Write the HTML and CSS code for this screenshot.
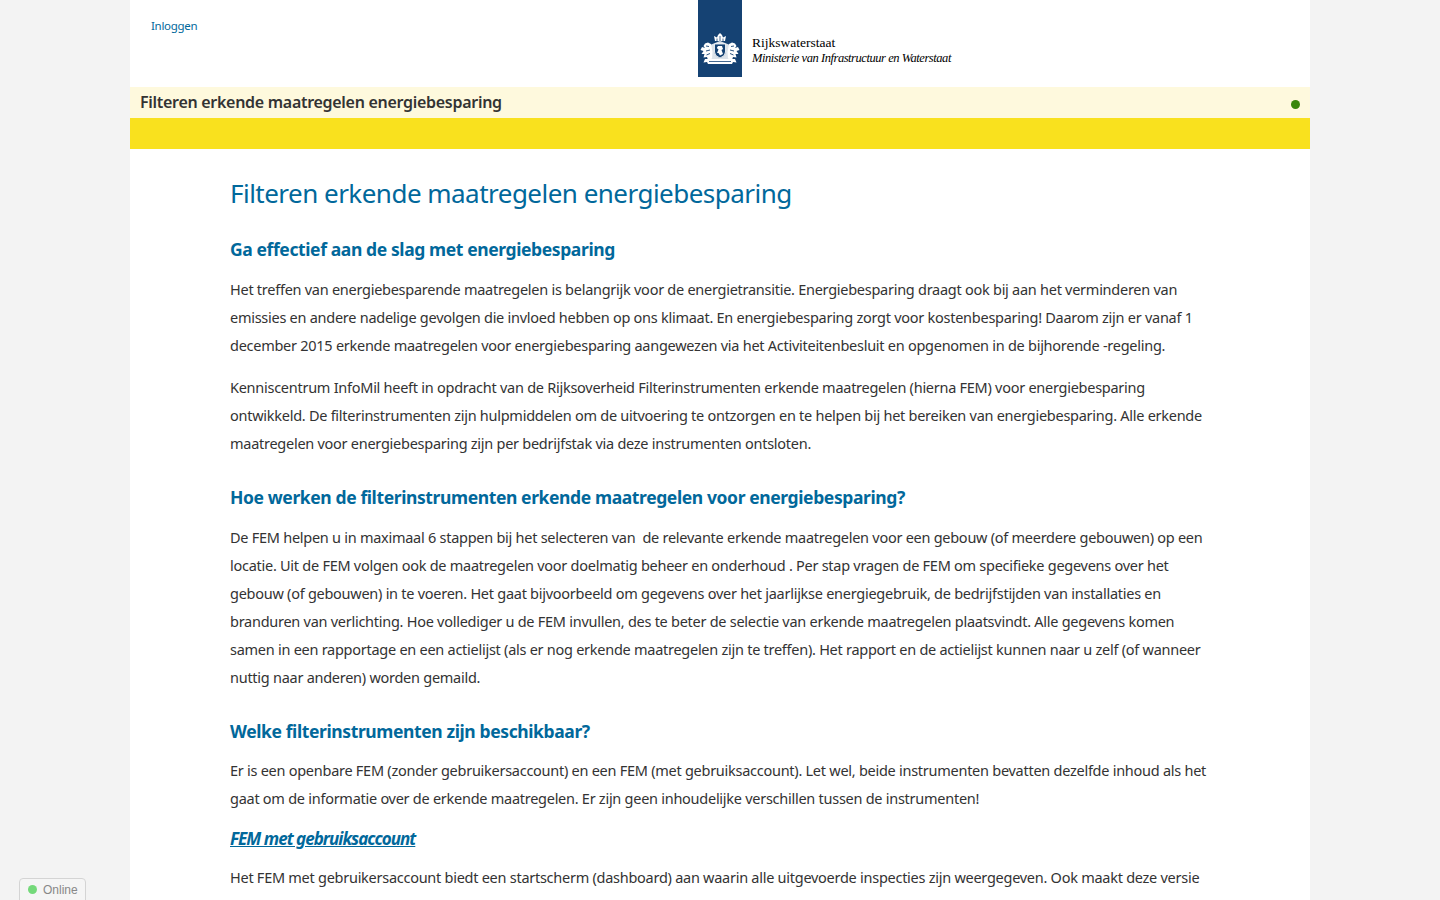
FILE: index.html

```html
<!DOCTYPE html>
<html lang="nl">
<head>
    <meta charset="utf-8">
    <title>Filteren erkende maatregelen energiebesparing</title>
    <link rel="stylesheet" href="styles.css">
</head>
<body>
    <div class="wrapper">
        <header class="top">
            <a class="login" href="#">Inloggen</a>
            <div class="logo">
                <div class="logo-block">
                    <svg class="crest" width="40" height="34" viewBox="0 0 40 34">
                        <!-- crown -->
                        <path d="M15 9 L14 4 L17 5.5 L18 3 L20 1 L22 3 L23 5.5 L26 4 L25 9 Z" fill="#fff"/>
                        <path d="M17 6.5 V9 M20 4 V9 M23 6.5 V9" stroke="#154273" stroke-width="0.8"/>
                        <!-- mantle -->
                        <path d="M20 9 L30 13 L29 27 H11 L10 13 Z" fill="#fff" opacity="0.85"/>
                        <!-- shield -->
                        <path d="M14.5 12 H25.5 V20 Q25.5 24 20 26 Q14.5 24 14.5 20 Z" fill="#154273" stroke="#fff" stroke-width="0.8"/>
                        <path d="M18 14 L22 14 L23 17 L21.5 18 L23 22 L20 23.5 L18.5 21 L17 21 L18.5 17.5 L16.8 16 Z" fill="#fff"/>
                        <!-- lions -->
                        <g fill="#fff">
                            <path d="M11 12 L8 10.5 L5 11.5 L3.5 14 L5 16 L2 15 L0.5 18 L3.5 19 L1.5 22 L4.5 22 L3.5 25.5 L7 25 L8 28 L12 26.5 L12.5 20 Z"/>
                            <path d="M6 14 L9 14.5 M6 19 L10 18 M6.5 23 L10 21.5" stroke="#154273" stroke-width="0.9" fill="none"/>
                        </g>
                        <g fill="#fff" transform="translate(40 0) scale(-1 1)">
                            <path d="M11 12 L8 10.5 L5 11.5 L3.5 14 L5 16 L2 15 L0.5 18 L3.5 19 L1.5 22 L4.5 22 L3.5 25.5 L7 25 L8 28 L12 26.5 L12.5 20 Z"/>
                            <path d="M6 14 L9 14.5 M6 19 L10 18 M6.5 23 L10 21.5" stroke="#154273" stroke-width="0.9" fill="none"/>
                        </g>
                        <!-- ribbon -->
                        <path d="M5 27 H35 L36.5 30.5 L33 30 L32 32 H8 L7 30 L3.5 30.5 Z" fill="#fff"/>
                        <path d="M9 29.5 H31" stroke="#154273" stroke-width="0.8"/>
                    </svg>
                </div>
                <div class="logo-text">
                    <span class="logo-org">Rijkswaterstaat</span>
                    <span class="logo-min">Ministerie van Infrastructuur en Waterstaat</span>
                </div>
            </div>
        </header>

        <div class="title-bar">
            <span class="app-title">Filteren erkende maatregelen energiebesparing</span>
            <span class="status-dot"></span>
        </div>
        <div class="yellow-bar"></div>

        <main class="content">
            <h1>Filteren erkende maatregelen energiebesparing</h1>

            <h2>Ga effectief aan de slag met energiebesparing</h2>
            <p>Het treffen van energiebesparende maatregelen is belangrijk voor de energietransitie. Energiebesparing draagt ook bij aan het verminderen van<br>emissies en andere nadelige gevolgen die invloed hebben op ons klimaat. En energiebesparing zorgt voor kostenbesparing! Daarom zijn er vanaf 1<br>december 2015 erkende maatregelen voor energiebesparing aangewezen via het Activiteitenbesluit en opgenomen in de bijhorende -regeling.</p>
            <p>Kenniscentrum InfoMil heeft in opdracht van de Rijksoverheid Filterinstrumenten erkende maatregelen (hierna FEM) voor energiebesparing<br>ontwikkeld. De filterinstrumenten zijn hulpmiddelen om de uitvoering te ontzorgen en te helpen bij het bereiken van energiebesparing. Alle erkende<br>maatregelen voor energiebesparing zijn per bedrijfstak via deze instrumenten ontsloten.</p>

            <h2 class="h2-gap">Hoe werken de filterinstrumenten erkende maatregelen voor energiebesparing?</h2>
            <p>De FEM helpen u in maximaal 6 stappen bij het selecteren van&nbsp; de relevante erkende maatregelen voor een gebouw (of meerdere gebouwen) op een<br>locatie. Uit de FEM volgen ook de maatregelen voor doelmatig beheer en onderhoud . Per stap vragen de FEM om specifieke gegevens over het<br>gebouw (of gebouwen) in te voeren. Het gaat bijvoorbeeld om gegevens over het jaarlijkse energiegebruik, de bedrijfstijden van installaties en<br>branduren van verlichting. Hoe vollediger u de FEM invullen, des te beter de selectie van erkende maatregelen plaatsvindt. Alle gegevens komen<br>samen in een rapportage en een actielijst (als er nog erkende maatregelen zijn te treffen). Het rapport en de actielijst kunnen naar u zelf (of wanneer<br>nuttig naar anderen) worden gemaild.</p>

            <h2 class="h2-gap h2-tight">Welke filterinstrumenten zijn beschikbaar?</h2>
            <p>Er is een openbare FEM (zonder gebruikersaccount) en een FEM (met gebruiksaccount). Let wel, beide instrumenten bevatten dezelfde inhoud als het<br>gaat om de informatie over de erkende maatregelen. Er zijn geen inhoudelijke verschillen tussen de instrumenten!</p>

            <h3><a href="#">FEM met gebruiksaccount</a></h3>
            <p>Het FEM met gebruikersaccount biedt een startscherm (dashboard) aan waarin alle uitgevoerde inspecties zijn weergegeven. Ook maakt deze versie</p>
        </main>
    </div>

    <div class="online"><span class="online-dot"></span>Online</div>
</body>
</html>
```

FILE: styles.css

```css
html, body {
    height: 100%;
    overflow: hidden;
}

body {
    margin: 0;
    background-color: #f3f3f3;
    font-family: "Noto Sans", sans-serif;
    color: #333;
}

.wrapper {
    width: 1180px;
    min-height: 100%;
    margin: 0 auto;
    background-color: #fff;
}

.top {
    display: flex;
    justify-content: space-between;
    height: 87px;
}

.login {
    margin: 18px 0 0 21px;
    font-size: 11.5px;
    line-height: 16px;
    letter-spacing: -0.3px;
    color: #01689b;
    text-decoration: none;
}

.logo {
    display: flex;
    align-items: flex-start;
    width: 612px;
}

.logo-block {
    display: flex;
    align-items: flex-end;
    justify-content: center;
    width: 44px;
    height: 77px;
    padding-bottom: 11px;
    box-sizing: border-box;
    background-color: #154273;
}

.logo-text {
    display: flex;
    flex-direction: column;
    margin: 34px 0 0 10px;
    font-family: "Liberation Serif", serif;
    color: #000;
}

.logo-org {
    font-size: 13.5px;
    line-height: 17px;
}

.logo-min {
    font-size: 12.5px;
    line-height: 15px;
    font-style: italic;
    letter-spacing: -0.45px;
}

.title-bar {
    display: flex;
    justify-content: space-between;
    align-items: center;
    height: 31px;
    padding: 0 10px;
    background-color: #fef9dd;
}

.app-title {
    margin-bottom: 2px;
    font-size: 16px;
    font-weight: 600;
    letter-spacing: -0.29px;
    color: #333;
}

.status-dot {
    width: 9px;
    height: 9px;
    margin-top: 4px;
    border-radius: 50%;
    background-color: #39870c;
}

.yellow-bar {
    height: 31px;
    background-color: #f9e11e;
}

.content {
    padding: 27px 100px 0;
}

h1 {
    margin: 0 0 26px;
    font-size: 26px;
    line-height: 34px;
    font-weight: 400;
    letter-spacing: -0.52px;
    color: #01689b;
}

h2 {
    margin: 0 0 13px;
    font-size: 17.5px;
    line-height: 26px;
    font-weight: 700;
    letter-spacing: -0.39px;
    color: #01689b;
}

.h2-gap {
    margin-top: 27px;
}

.h2-tight {
    margin-bottom: 12px;
}

h3 {
    margin: 0 0 11px;
    font-size: 17px;
    line-height: 26px;
    font-weight: 700;
    font-style: italic;
    letter-spacing: -0.98px;
}

h3 a {
    color: #01689b;
}

p {
    margin: 0 0 14px;
    font-size: 14.5px;
    line-height: 28px;
    letter-spacing: -0.265px;
    white-space: nowrap;
}

.online {
    position: fixed;
    left: 19px;
    bottom: -1px;
    display: flex;
    align-items: center;
    height: 21px;
    padding: 0 7px 0 8px;
    border: 1px solid #d4d4d4;
    border-radius: 4px 4px 0 0;
    background-color: #f5f5f5;
    font-family: "Liberation Sans", sans-serif;
    font-size: 12px;
    color: #888;
}

.online-dot {
    width: 9px;
    height: 9px;
    margin-right: 6px;
    border-radius: 50%;
    background-color: #74d97a;
}
```
